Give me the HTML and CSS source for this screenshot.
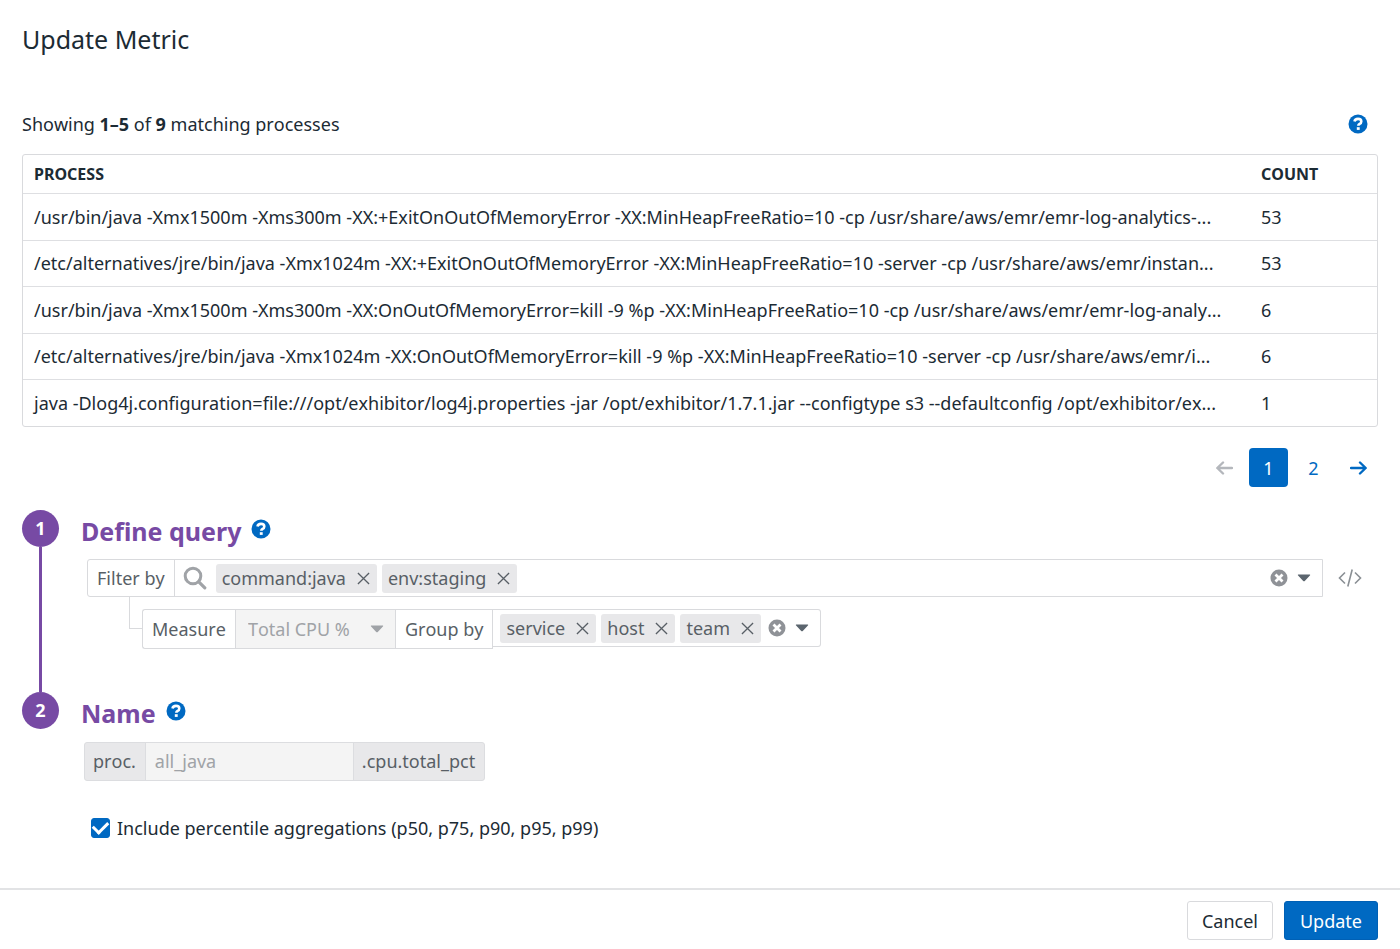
FILE: index.html
```html
<!DOCTYPE html>
<html lang="en">
<head>
	<meta charset="UTF-8">
	<meta name="viewport" content="width=device-width, initial-scale=1">
	<title>Update Metric</title>
	<link rel="stylesheet" href="styles.css">
</head>
<body>
	<svg class="sprite" aria-hidden="true">
		<symbol id="i-help" viewBox="0 0 20 20">
			<circle cx="10" cy="10" r="9.5" fill="currentColor"/>
			<path d="M6.5 7.500C6.800 5.700 8.200 4.900 10 4.900c2 0 3.300 1 3.300 2.600 0 1.300-.7 1.900-1.700 2.500-.9.5-1.300.8-1.300 1.700" fill="none" stroke="#fff" stroke-width="2.600"/>
			<path d="M8.800 13.200h2.900v2.700H8.800z" fill="#fff"/>
		</symbol>
		<symbol id="i-cross" viewBox="0 0 14 14">
			<path d="M1 1l12 12M13 1L1 13" fill="none" stroke="currentColor" stroke-width="1.4"/>
		</symbol>
		<symbol id="i-clear" viewBox="0 0 18 18">
			<circle cx="9" cy="9" r="8.5" fill="currentColor"/>
			<path d="M5.500 5.500l7 7M12.500 5.500l-7 7" fill="none" stroke="#fff" stroke-width="2.8"/>
		</symbol>
		<symbol id="i-caret" viewBox="0 0 14 8">
			<path d="M1.6.5h10.8c.8 0 1 .6.5 1.100L7.800 6.900c-.5.5-1.100.5-1.600 0L1.100 1.600C.6 1.100.8.5 1.600.5z" fill="currentColor"/>
		</symbol>
		<symbol id="i-arrow" viewBox="0 0 18 14">
			<path d="M1 7h14.500M10 1.500L15.700 7 10 12.500" fill="none" stroke="currentColor" stroke-width="2.400" stroke-linecap="round" stroke-linejoin="round"/>
		</symbol>
	</svg>

	<header class="header">
		<h1 class="title">Update Metric</h1>
	</header>

	<main class="content">
		<div class="summary">
			<p>Showing <b>1–5</b> of <b>9</b> matching processes</p>
			<button type="button" class="help" aria-label="Help"><svg><use href="#i-help"/></svg></button>
		</div>

		<div class="table-wrap">
			<table class="processes">
				<thead>
					<tr><th scope="col">PROCESS</th><th scope="col" class="count">COUNT</th></tr>
				</thead>
				<tbody>
					<tr><td>/usr/bin/java -Xmx1500m -Xms300m -XX:+ExitOnOutOfMemoryError -XX:MinHeapFreeRatio=10 -cp /usr/share/aws/emr/emr-log-analytics-...</td><td>53</td></tr>
					<tr><td>/etc/alternatives/jre/bin/java -Xmx1024m -XX:+ExitOnOutOfMemoryError -XX:MinHeapFreeRatio=10 -server -cp /usr/share/aws/emr/instan...</td><td>53</td></tr>
					<tr><td>/usr/bin/java -Xmx1500m -Xms300m -XX:OnOutOfMemoryError=kill -9 %p -XX:MinHeapFreeRatio=10 -cp /usr/share/aws/emr/emr-log-analy...</td><td>6</td></tr>
					<tr><td>/etc/alternatives/jre/bin/java -Xmx1024m -XX:OnOutOfMemoryError=kill -9 %p -XX:MinHeapFreeRatio=10 -server -cp /usr/share/aws/emr/i...</td><td>6</td></tr>
					<tr><td>java -Dlog4j.configuration=file:///opt/exhibitor/log4j.properties -jar /opt/exhibitor/1.7.1.jar --configtype s3 --defaultconfig /opt/exhibitor/ex...</td><td>1</td></tr>
				</tbody>
			</table>
		</div>

		<nav class="pager" aria-label="Pages">
			<button type="button" class="page prev" aria-label="Previous" disabled><svg><use href="#i-arrow"/></svg></button>
			<button type="button" class="page active" aria-current="page">1</button>
			<button type="button" class="page">2</button>
			<button type="button" class="page" aria-label="Next"><svg><use href="#i-arrow"/></svg></button>
		</nav>

		<section class="step step-query">
			<div class="rail"><span class="num">1</span></div>
			<div class="step-body">
				<div class="step-head">
					<h2>Define query</h2>
					<button type="button" class="help" aria-label="Help"><svg><use href="#i-help"/></svg></button>
				</div>
				<div class="filter-row">
					<div class="filter">
						<label class="cell" for="filter">Filter by</label>
						<svg class="search" viewBox="0 0 24 24" aria-hidden="true">
							<circle cx="10" cy="10" r="7.800" fill="none" stroke="currentColor" stroke-width="3"/>
							<path d="M15.800 15.800l6 6" stroke="currentColor" stroke-width="3.200" stroke-linecap="round"/>
						</svg>
						<div class="tags">
							<span class="tag">command:java<button type="button" aria-label="Remove command:java"><svg><use href="#i-cross"/></svg></button></span>
							<span class="tag">env:staging<button type="button" aria-label="Remove env:staging"><svg><use href="#i-cross"/></svg></button></span>
						</div>
						<input type="text" id="filter" class="filter-input">
						<button type="button" class="clear" aria-label="Clear"><svg><use href="#i-clear"/></svg></button>
						<button type="button" class="caret" aria-label="Open"><svg><use href="#i-caret"/></svg></button>
					</div>
					<button type="button" class="code" aria-label="Edit as text">
						<svg viewBox="0 0 24 20">
							<path d="M7 4.500L1.500 10 7 15.500M17 4.500l5.500 5.500-5.500 5.500M14.200 1.500l-4.400 17" fill="none" stroke="currentColor" stroke-width="1.600"/>
						</svg>
					</button>
				</div>
				<div class="measure-row">
					<span class="elbow"></span>
					<div class="measure">
						<label class="cell" for="measure">Measure</label>
						<div class="select">
							<select id="measure" disabled>
								<option>Total CPU %</option>
							</select>
							<svg><use href="#i-caret"/></svg>
						</div>
						<span class="cell" id="group-label">Group by</span>
					</div>
					<div class="group" role="group" aria-labelledby="group-label">
						<div class="tags">
							<span class="tag">service<button type="button" aria-label="Remove service"><svg><use href="#i-cross"/></svg></button></span>
							<span class="tag">host<button type="button" aria-label="Remove host"><svg><use href="#i-cross"/></svg></button></span>
							<span class="tag">team<button type="button" aria-label="Remove team"><svg><use href="#i-cross"/></svg></button></span>
						</div>
						<button type="button" class="clear" aria-label="Clear"><svg><use href="#i-clear"/></svg></button>
						<button type="button" class="caret" aria-label="Open"><svg><use href="#i-caret"/></svg></button>
					</div>
				</div>
			</div>
		</section>

		<section class="step">
			<div class="rail"><span class="num">2</span></div>
			<div class="step-body">
				<div class="step-head">
					<h2>Name</h2>
					<button type="button" class="help" aria-label="Help"><svg><use href="#i-help"/></svg></button>
				</div>
				<div class="name">
					<label for="name">proc.</label>
					<input type="text" id="name" value="all_java" disabled>
					<span>.cpu.total_pct</span>
				</div>
				<div class="check">
					<input type="checkbox" id="percentiles" checked>
					<label for="percentiles">Include percentile aggregations (p50, p75, p90, p95, p99)</label>
				</div>
			</div>
		</section>
	</main>

	<footer class="footer">
		<button type="button" class="btn">Cancel</button>
		<button type="button" class="btn primary">Update</button>
	</footer>
</body>
</html>
```

FILE: styles.css
```css
* {
	box-sizing: border-box;
}
body {
	display: flex;
	flex-direction: column;
	min-height: 100vh;
	margin: 0;
	background: #fff;
	color: #1c2b34;
	font-family: "Noto Sans", sans-serif;
	font-size: 18px;
	font-kerning: none;
	line-height: 24px;
}
h1, h2, p {
	margin: 0;
}
button, input, select {
	font: inherit;
	font-kerning: inherit;
	color: inherit;
}
button {
	display: flex;
	align-items: center;
	justify-content: center;
	padding: 0;
	border: 0;
	background: none;
	cursor: pointer;
}
.sprite {
	display: none;
}
.header {
	padding: 20px 22px;
}
.title {
	font-size: 25px;
	line-height: 38px;
	font-weight: 400;
}
.content {
	flex: 1;
	padding: 34px 22px 0;
}
.help {
	color: #0069c2;
}
.help svg {
	width: 20px;
	height: 20px;
}

/* process table */
.summary {
	display: flex;
	justify-content: space-between;
	align-items: center;
	padding-right: 10px;
	margin-bottom: 18px;
}
.table-wrap {
	border: 1px solid #d9dadd;
	border-radius: 3px;
}
.processes {
	width: 100%;
	table-layout: fixed;
	border-collapse: collapse;
}
.processes th {
	height: 38px;
	padding: 0 11px;
	font-size: 16px;
	font-weight: 700;
	text-align: left;
}
.processes .count {
	width: 127px;
}
.processes td {
	height: 46px;
	padding: 0 11px;
	border-top: 1px solid #dedfe2;
	white-space: nowrap;
	overflow: hidden;
	text-overflow: ellipsis;
}
.processes tr:nth-child(odd) td {
	height: 47px;
}

.pager {
	display: flex;
	justify-content: flex-end;
	gap: 6px;
	margin: 21px 0 23px;
}
.page {
	width: 39px;
	height: 39px;
	border-radius: 4px;
	color: #0069c2;
}
.page svg {
	width: 18px;
	height: 14px;
}
.page.active {
	background: #0069c2;
	color: #fff;
}
.page.prev {
	color: #b4b7bc;
}
.page.prev svg {
	transform: scaleX(-1);
}

/* steps */
.step {
	display: flex;
	gap: 22px;
}
.rail {
	display: flex;
	flex-direction: column;
	align-items: center;
}
.num {
	width: 37px;
	height: 37px;
	border-radius: 50%;
	background: #774aa4;
	color: #fff;
	font-weight: 700;
	line-height: 36px;
	text-align: center;
}
.step-query .rail::after {
	content: "";
	flex: 1;
	width: 3px;
	background: #774aa4;
}
.step-body {
	flex: 1;
	min-width: 0;
}
.step-query .step-body {
	padding-bottom: 43px;
}
.step-head {
	display: flex;
	align-items: flex-start;
	gap: 10px;
	height: 49px;
}
.step-head h2 {
	color: #774aa4;
	font-size: 25px;
	line-height: 43px;
	font-weight: 700;
}
.step-head .help {
	margin-top: 9px;
}
.filter-row {
	display: flex;
	align-items: center;
	gap: 15px;
	padding: 0 16px 0 6px;
	color: #585f66;
}
.filter {
	flex: 1;
	display: flex;
	align-items: center;
	height: 38px;
	padding-right: 11px;
	border: 1px solid #d9dadd;
	border-radius: 3px 0 0 3px;
}
.cell {
	display: flex;
	align-items: center;
	align-self: stretch;
	padding: 0 9px;
	border-right: 1px solid #d9dadd;
}
.search {
	width: 24px;
	height: 24px;
	margin: 0 9px 0 8px;
	color: #a0a3a7;
}
.tags {
	display: flex;
	gap: 5px;
}
.tag {
	display: flex;
	align-items: center;
	gap: 11px;
	height: 29px;
	padding: 0 7px 0 6px;
	border-radius: 3px;
	background: #e8e8ea;
}
.tag svg {
	width: 13px;
	height: 13px;
}
.filter-input {
	flex: 1;
	min-width: 0;
	border: 0;
	outline: 0;
	background: none;
}
.clear {
	color: #8f9297;
}
.clear svg {
	width: 18px;
	height: 18px;
}
.caret {
	margin-left: 9px;
	color: #5b656e;
}
.caret svg,
.select svg {
	width: 14px;
	height: 8px;
}
.code {
	color: #8a8f94;
}
.code svg {
	width: 24px;
	height: 20px;
}
.measure-row {
	display: flex;
	align-items: flex-start;
	padding-left: 48px;
	color: #585f66;
}
.elbow {
	width: 13px;
	height: 32px;
	border: solid #d9dadd;
	border-width: 0 0 1px 1px;
}
.measure {
	display: flex;
	height: 40px;
	margin-top: 12px;
	border: 1px solid #d9dadd;
	border-right: 0;
	border-radius: 3px 0 0 3px;
}
.select {
	display: grid;
	align-items: center;
	width: 160px;
	border-right: 1px solid #d9dadd;
	background: #f4f4f4;
	color: #a0a3a7;
}
.select select,
.select svg {
	grid-area: 1 / 1;
}
.select select {
	appearance: none;
	width: 100%;
	height: 100%;
	padding: 0 12px;
	border: 0;
	background: none;
	opacity: 1;
}
.select svg {
	justify-self: end;
	margin-right: 11px;
	pointer-events: none;
}
.group {
	display: flex;
	align-items: center;
	height: 38px;
	margin-top: 12px;
	padding: 0 11px 0 7px;
	border: 1px solid #d9dadd;
	border-left: 0;
	border-radius: 0 3px 3px 0;
}
.group .clear {
	margin-left: 7px;
}

/* metric name */
.name {
	display: flex;
	width: fit-content;
	height: 39px;
	margin: 1px 0 0 3px;
	border: 1px solid #dcdde0;
	border-radius: 3px;
	background: #e8e8ea;
	color: #585f66;
	line-height: 37px;
}
.name label,
.name span {
	padding: 0 9px 0 8px;
}
.name input {
	width: 209px;
	padding: 0 9px;
	border: solid #dcdde0;
	border-width: 0 1px;
	background: #f4f4f4;
	color: #a0a3a7;
}
.check {
	display: flex;
	align-items: center;
	gap: 7px;
	margin: 35px 0 24px 10px;
}
.check input {
	appearance: none;
	display: grid;
	place-items: center;
	width: 19px;
	height: 20px;
	margin: 0;
	border: 1px solid #0069c2;
	border-radius: 3px;
}
.check input:checked {
	background: #0069c2;
}
.check input:checked::before {
	content: "";
	width: 12px;
	height: 7px;
	margin-bottom: 4px;
	border: solid #fff;
	border-width: 0 0 3px 3px;
	transform: rotate(-45deg);
}

.footer {
	display: flex;
	justify-content: flex-end;
	gap: 11px;
	padding: 11px 22px 9px;
	border-top: 2px solid #e2e3e5;
}
.btn {
	height: 39px;
	padding: 0 14px;
	border: 1px solid #d9dadd;
	border-radius: 3px;
}
.primary {
	padding: 0 15px;
	border-color: #0060b5;
	background: #0069c2;
	color: #fff;
}
```
